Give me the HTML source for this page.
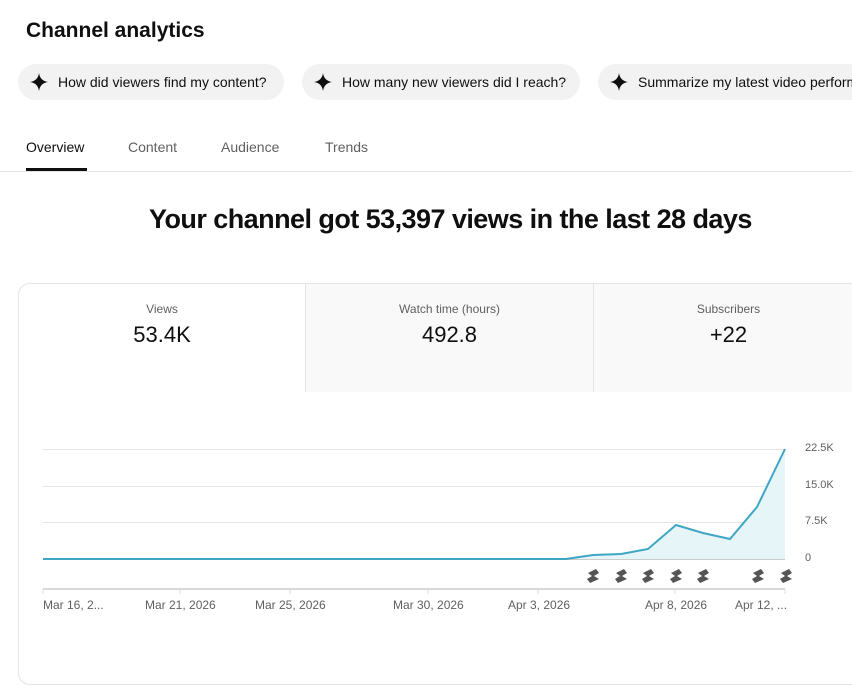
<!DOCTYPE html>
<html><head><meta charset="utf-8"><style>
body{margin:0;width:852px;height:631px;overflow:hidden;background:#fff;font-family:"Liberation Sans",sans-serif;color:#0f0f0f;position:relative}
.a{position:absolute;white-space:nowrap}
.chip{position:absolute;top:64px;height:36px;border-radius:18px;background:#f2f2f2;font-size:14px;line-height:36px;padding-left:40px;box-sizing:border-box;white-space:nowrap}
.chip svg{position:absolute;left:12px;top:9px}
.tab{position:absolute;top:139px;font-size:14px;color:#606060}
.tile{position:absolute;top:284px;height:108px;text-align:center;box-sizing:border-box}
.tile .l{margin-top:18px;font-size:12px;color:#606060}
.tile .v{margin-top:6px;font-size:22px;color:#0f0f0f}
.xl{position:absolute;top:598px;font-size:12px;color:#606060;white-space:nowrap}
.yl{position:absolute;left:805px;font-size:11px;color:#606060}
</style></head><body>
<div class="a" style="left:26px;top:19px;font-size:21px;font-weight:bold">Channel analytics</div>
<div class="chip" style="left:18px;width:266px"><svg width="18" height="18" viewBox="0 0 16 16"><path d="M8 0Q9 7 16 8Q9 9 8 16Q7 9 0 8Q7 7 8 0Z" fill="#0f0f0f"/></svg>How did viewers find my content?</div>
<div class="chip" style="left:302px;width:278px"><svg width="18" height="18" viewBox="0 0 16 16"><path d="M8 0Q9 7 16 8Q9 9 8 16Q7 9 0 8Q7 7 8 0Z" fill="#0f0f0f"/></svg>How many new viewers did I reach?</div>
<div class="chip" style="left:598px;width:300px"><svg width="18" height="18" viewBox="0 0 16 16"><path d="M8 0Q9 7 16 8Q9 9 8 16Q7 9 0 8Q7 7 8 0Z" fill="#0f0f0f"/></svg>Summarize my latest video performance</div>
<div class="tab" style="left:26px;color:#0f0f0f">Overview</div>
<div class="a" style="left:26px;top:168px;width:61px;height:3px;background:#0f0f0f"></div>
<div class="tab" style="left:128px">Content</div>
<div class="tab" style="left:221px">Audience</div>
<div class="tab" style="left:325px">Trends</div>
<div class="a" style="left:0;top:171px;width:852px;height:1px;background:#e5e5e5"></div>
<div class="a" style="left:149px;top:204px;font-size:27px;font-weight:bold;letter-spacing:-0.55px">Your channel got 53,397 views in the last 28 days</div>
<div class="a" style="left:18px;top:283px;width:900px;height:400px;border:1px solid #e5e5e5;border-radius:12px"></div>
<div class="tile" style="left:19px;width:286px;background:#fff;border-radius:12px 0 0 0"><div class="l">Views</div><div class="v">53.4K</div></div>
<div class="tile" style="left:305px;width:288px;background:#f9f9f9;border-left:1px solid #e5e5e5"><div class="l">Watch time (hours)</div><div class="v">492.8</div></div>
<div class="tile" style="left:593px;width:270px;background:#f9f9f9;border-left:1px solid #e5e5e5"><div class="l">Subscribers</div><div class="v">+22</div></div>
<svg class="a" style="left:0;top:0" width="852" height="631">
<g stroke="#e5e5e5" stroke-width="1">
<line x1="43" y1="449.5" x2="785" y2="449.5"/><line x1="43" y1="486.5" x2="785" y2="486.5"/><line x1="43" y1="522.5" x2="785" y2="522.5"/>
</g>
<line x1="43" y1="559.5" x2="785" y2="559.5" stroke="#ccc"/>
<line x1="43" y1="589" x2="785" y2="589" stroke="#ccc" stroke-width="1.5"/>
<g stroke="#ddd"><line x1="43" y1="589" x2="43" y2="594"/><line x1="180" y1="589" x2="180" y2="594"/><line x1="290" y1="589" x2="290" y2="594"/><line x1="428" y1="589" x2="428" y2="594"/><line x1="538" y1="589" x2="538" y2="594"/><line x1="675" y1="589" x2="675" y2="594"/><line x1="785" y1="589" x2="785" y2="594"/></g>
<path d="M566 559L593 555L621 554L648 549L676 525L703 533L730 539L757 507L785 449L785 559Z" fill="#e6f5f8"/>
<path d="M43 559L566 559L593 555L621 554L648 549L676 525L703 533L730 539L757 507L785 449" fill="none" stroke="#3ea6c4" stroke-width="2"/>
<g fill="#555">
<g transform="translate(593,576)"><path d="M-5 -3L3 -7L6 -3L1 0L6 3L-3 7L-6 3L-1 0Z"/></g>
<g transform="translate(621,576)"><path d="M-5 -3L3 -7L6 -3L1 0L6 3L-3 7L-6 3L-1 0Z"/></g>
<g transform="translate(648,576)"><path d="M-5 -3L3 -7L6 -3L1 0L6 3L-3 7L-6 3L-1 0Z"/></g>
<g transform="translate(676,576)"><path d="M-5 -3L3 -7L6 -3L1 0L6 3L-3 7L-6 3L-1 0Z"/></g>
<g transform="translate(703,576)"><path d="M-5 -3L3 -7L6 -3L1 0L6 3L-3 7L-6 3L-1 0Z"/></g>
<g transform="translate(758,576)"><path d="M-5 -3L3 -7L6 -3L1 0L6 3L-3 7L-6 3L-1 0Z"/></g>
<g transform="translate(786,576)"><path d="M-5 -3L3 -7L6 -3L1 0L6 3L-3 7L-6 3L-1 0Z"/></g>
</g>
</svg>
<div class="yl" style="top:442px">22.5K</div>
<div class="yl" style="top:479px">15.0K</div>
<div class="yl" style="top:515px">7.5K</div>
<div class="yl" style="top:552px">0</div>
<div class="xl" style="left:43px">Mar 16, 2...</div>
<div class="xl" style="left:145px">Mar 21, 2026</div>
<div class="xl" style="left:255px">Mar 25, 2026</div>
<div class="xl" style="left:393px">Mar 30, 2026</div>
<div class="xl" style="left:508px">Apr 3, 2026</div>
<div class="xl" style="left:645px">Apr 8, 2026</div>
<div class="xl" style="left:735px">Apr 12, ...</div>
</body></html>
